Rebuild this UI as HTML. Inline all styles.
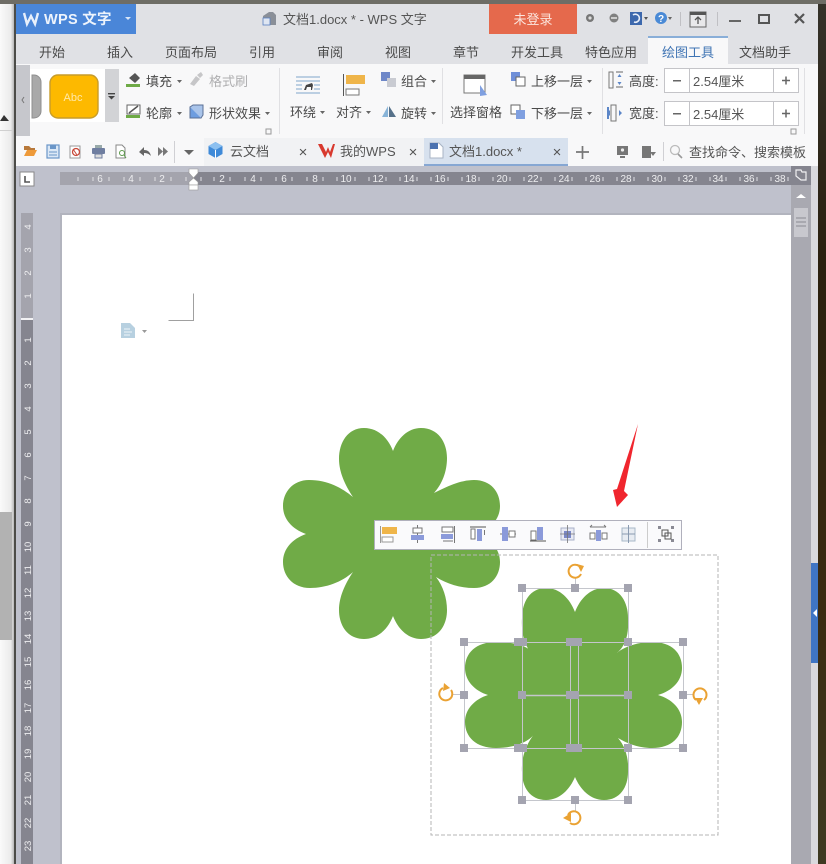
<!DOCTYPE html>
<html lang="zh"><head><meta charset="utf-8"><title>WPS 文字</title>
<style>
html,body{margin:0;padding:0;background:#fff;width:826px;height:864px;overflow:hidden}
svg{display:block;position:absolute;left:0;top:0;filter:blur(.35px)}
text{font-family:"Liberation Sans","Noto Sans CJK SC",sans-serif;fill:#444;font-size:13px}
.t{font-size:13px;fill:#4a4a4a}
.r{font-size:10px;fill:#eeeef0;text-anchor:middle}
.v{font-size:9.5px;fill:#eeeef0;text-anchor:middle}
.m{text-anchor:middle}
.x{font-size:15px;fill:#555;text-anchor:middle}
</style></head><body>
<svg width="826" height="864" viewBox="0 0 826 864" xmlns="http://www.w3.org/2000/svg">
<defs>
<linearGradient id="lg" x1="0" x2="1" y1="0" y2="0"><stop offset="0" stop-color="#fafafa"/><stop offset=".72" stop-color="#ebebeb"/><stop offset="1" stop-color="#a8a8a8"/></linearGradient>
<linearGradient id="rg" x1="0" x2="0" y1="0" y2="1"><stop offset="0" stop-color="#35322a"/><stop offset=".3" stop-color="#2a200f"/><stop offset=".7" stop-color="#3a2a10"/><stop offset="1" stop-color="#3e3a22"/></linearGradient>
</defs>
<!-- backdrop -->
<rect x="0" y="0" width="15" height="864" fill="url(#lg)"/>
<rect x="0" y="512" width="12" height="128" fill="#b2b2b2"/>
<rect x="0" y="130" width="13" height="1" fill="#d0d0d0"/>
<path d="M0 121L4 115L9 121Z" fill="#333"/>
<rect x="14" y="0" width="2" height="864" fill="#4c4c48"/>
<rect x="818" y="0" width="8" height="864" fill="url(#rg)"/>
<rect x="0" y="0" width="826" height="4" fill="#6e6d66"/>
<!-- chrome -->
<rect x="16" y="4" width="802" height="860" fill="#bfc1cc"/>
<rect x="16" y="4" width="802" height="60" fill="#e0e1e5"/>
<rect x="16" y="64" width="802" height="102" fill="#f8f8f9"/>
<!-- logo -->
<rect x="16" y="4" width="120" height="30" fill="#4a86d8"/>
<path d="M24 13L27 24L31 16L35 24L38 13" fill="none" stroke="#e8f0fb" stroke-width="2.4"/>
<text x="44" y="24" style="font-size:14.5px;font-weight:700;fill:#eef4fc;letter-spacing:.3px">WPS 文字</text>
<path d="M125 17L131 17L128 20Z" fill="#d8e6f8"/>
<!-- title -->
<path d="M263 16L269 12L273 12L276 15L276 25L263 25Z" fill="#8a8f98"/><rect x="263" y="18" width="7" height="7" fill="#dfe6f2" stroke="#5a80c0" stroke-width=".8"/>
<text x="283" y="24" style="font-size:13px;fill:#555">文档1.docx * - WPS 文字</text>
<rect x="489" y="4" width="88" height="30" fill="#e5694c"/>
<text x="533" y="24" class="m" style="font-size:13px;fill:#fbe5dd">未登录</text>
<!-- window buttons -->
<circle cx="590" cy="18" r="4" fill="#777" /><circle cx="590" cy="18" r="1.6" fill="#ddd"/>
<circle cx="614" cy="18" r="4.5" fill="#808080"/><rect x="611" y="17" width="6" height="2" fill="#ccc"/>
<rect x="630" y="12" width="12" height="13" fill="#3d68ad"/><path d="M633 15a4 4 0 1 1 1 7" fill="none" stroke="#e8eef8" stroke-width="1.6"/><path d="M644 17h4l-2 3z" fill="#555"/>
<circle cx="661" cy="18" r="6" fill="#4a8ad6"/><text x="661" y="22" class="m" style="font-size:10px;font-weight:700;fill:#fff">?</text><path d="M668 17h4l-2 3z" fill="#666"/>
<rect x="680" y="12" width="1" height="14" fill="#c0c0c4"/>
<rect x="690" y="12" width="16" height="15" fill="#e8e8ea" stroke="#666" stroke-width="1"/><rect x="690" y="12" width="16" height="3" fill="#555"/><path d="M698 24v-7M695 20l3-3 3 3" fill="none" stroke="#555" stroke-width="1.3"/>
<rect x="717" y="12" width="1" height="14" fill="#c0c0c4"/>
<rect x="729" y="20" width="12" height="2" fill="#666"/>
<rect x="759" y="15" width="10" height="8" fill="none" stroke="#555" stroke-width="2"/>
<path d="M795 14l9 9M804 14l-9 9" stroke="#555" stroke-width="2.2" fill="none"/>
<!-- tabs -->
<rect x="648" y="36" width="80" height="28" fill="#f8f8f9"/><rect x="648" y="36" width="80" height="2" fill="#89aed8"/>
<g class="t">
<text class="t m" x="52" y="57">开始</text><text class="t m" x="120" y="57">插入</text><text class="t m" x="191" y="57">页面布局</text><text class="t m" x="262" y="57">引用</text><text class="t m" x="330" y="57">审阅</text><text class="t m" x="398" y="57">视图</text><text class="t m" x="466" y="57">章节</text><text class="t m" x="537" y="57">开发工具</text><text class="t m" x="611" y="57">特色应用</text><text class="t m" x="688" y="57" style="fill:#3f74b4">绘图工具</text><text class="t m" x="765" y="57">文档助手</text>
</g>
<!-- ribbon gallery -->
<rect x="16" y="65" width="14" height="71" fill="#c6c7cc"/><path d="M24 97l-2 3 2 3" fill="none" stroke="#777"/>
<rect x="30" y="69" width="89" height="53" fill="#fff"/>
<path d="M32 75h2a7 7 0 0 1 7 7v29a7 7 0 0 1-7 7h-2z" fill="#a9a9a9" stroke="#8f8f8f"/>
<rect x="50" y="75" width="48" height="43" rx="8" fill="#fdb900" stroke="#c79c2a" stroke-width="1.4"/>
<text x="73" y="101" class="m" style="font-size:11px;fill:#ffe9a8">Abc</text>
<rect x="105" y="69" width="14" height="53" fill="#d2d3d6"/><rect x="108" y="93" width="7" height="1.4" fill="#444"/><path d="M108 96h7l-3.500 3.500z" fill="#444"/>
<!-- fill etc -->
<path d="M129 78l6-5 5 5-5 5zM131 73l3 2" fill="#555"/><rect x="126" y="84" width="14" height="3" fill="#6eaa46"/>
<text class="t" x="146" y="86">填充</text><path d="M177 80h5l-2.500 3z" fill="#666"/>
<path d="M190 84l6-8 4 3-6 7zM197 75l4-3 2 3-3 3z" fill="#c6c6c8"/>
<text class="t" x="209" y="86" style="fill:#aeaeb0">格式刷</text>
<rect x="127" y="105" width="13" height="9" fill="#fff" stroke="#666"/><path d="M129 113l9-7" stroke="#555" stroke-width="1.5"/><rect x="126" y="115" width="14" height="3" fill="#6eaa46"/>
<text class="t" x="146" y="118">轮廓</text><path d="M177 112h5l-2.500 3z" fill="#666"/>
<rect x="190" y="107" width="11" height="11" fill="#6d9de0" stroke="#5a6f95"/><path d="M190 107l3-2h10v10l-2 3" fill="#a9c4ea" stroke="#5a6f95"/>
<text class="t" x="209" y="118">形状效果</text><path d="M265 112h5l-2.500 3z" fill="#666"/>
<rect x="266" y="129" width="5" height="5" fill="none" stroke="#999"/>
<rect x="279" y="68" width="1" height="66" fill="#e0e0e3"/>
<!-- wrap -->
<g stroke="#7fa6cc" stroke-width="1"><path d="M296 77h24M296 81h24M296 85h6M314 85h6M296 89h6M314 89h6M296 93h24"/></g><path d="M304 90l2-5 6-2 1 2-1 5h-1v-3l-4 0-1 3z" fill="#444"/>
<text class="t" x="290" y="117">环绕</text><path d="M320 111h5l-2.500 3z" fill="#666"/>
<rect x="343" y="74" width="1" height="22" fill="#555"/><rect x="346" y="75" width="19" height="9" fill="#efb54a"/><rect x="346" y="89" width="13" height="6" fill="#fff" stroke="#777"/>
<text class="t" x="336" y="117">对齐</text><path d="M366 111h5l-2.500 3z" fill="#666"/>
<rect x="381" y="72" width="9" height="9" fill="#6e87c8"/><rect x="387" y="78" width="9" height="9" fill="#c9cbd2"/>
<text class="t" x="401" y="86">组合</text><path d="M431 80h5l-2.500 3z" fill="#666"/>
<path d="M382 117l6-11v11z" fill="#88b4d8"/><path d="M389 106l7 11h-7z" fill="#56718a"/>
<text class="t" x="401" y="118">旋转</text><path d="M431 112h5l-2.500 3z" fill="#666"/>
<rect x="442" y="68" width="1" height="56" fill="#e0e0e3"/>
<rect x="464" y="75" width="21" height="18" fill="#fff" stroke="#777"/><rect x="464" y="75" width="21" height="4" fill="#666"/><path d="M480 85l0 11 7-1z" fill="#7f9fe0"/>
<text class="t" x="450" y="117">选择窗格</text>
<rect x="511" y="72" width="9" height="9" fill="#6f8fd8"/><rect x="516" y="77" width="9" height="9" fill="#fff" stroke="#666"/>
<text class="t" x="531" y="86">上移一层</text><path d="M587 80h5l-2.500 3z" fill="#666"/>
<rect x="511" y="105" width="9" height="9" fill="#fff" stroke="#666"/><rect x="516" y="110" width="9" height="9" fill="#7f9fe0"/>
<text class="t" x="531" y="118">下移一层</text><path d="M587 112h5l-2.500 3z" fill="#666"/>
<rect x="602" y="68" width="1" height="66" fill="#e0e0e3"/>
<!-- size -->
<rect x="609" y="72" width="4" height="16" fill="none" stroke="#777"/><path d="M616 72h7M616 87h7" stroke="#666"/><path d="M619.500 74l-2 3h4zM619.500 85l-2-3h4z" fill="#5c86c8"/>
<text class="t" x="629" y="86">高度:</text>
<rect x="664.500" y="68.500" width="134" height="24" fill="#fff" stroke="#c4c4c8"/><path d="M689.500 68v25M773.500 68v25" stroke="#c4c4c8"/>
<rect x="673" y="80" width="8" height="1.500" fill="#666"/><path d="M782 80.500h8M786 76.500v8" stroke="#666" stroke-width="1.500"/>
<text x="693" y="86" style="font-size:13px;fill:#555">2.54厘米</text>
<rect x="607" y="107" width="2" height="12" fill="#5c86c8"/><rect x="611" y="105" width="5" height="16" fill="none" stroke="#777"/><path d="M607 113l3-3v6zM622 113l-3-3v6z" fill="#5c86c8"/>
<text class="t" x="629" y="118">宽度:</text>
<rect x="664.500" y="101.500" width="134" height="24" fill="#fff" stroke="#c4c4c8"/><path d="M689.500 101v25M773.500 101v25" stroke="#c4c4c8"/>
<rect x="673" y="113" width="8" height="1.500" fill="#666"/><path d="M782 113.500h8M786 109.500v8" stroke="#666" stroke-width="1.500"/>
<text x="693" y="119" style="font-size:13px;fill:#555">2.54厘米</text>
<rect x="791" y="129" width="5" height="5" fill="none" stroke="#999"/>
<rect x="804" y="68" width="1" height="66" fill="#e0e0e3"/>
<!-- QAT -->
<rect x="204" y="138" width="220" height="28" fill="#f1f2f4"/>
<path d="M24 146h5l2 2h4v2h-11z" fill="#b8793a"/><path d="M24 156l3-6h10l-3 6z" fill="#ee9a3a"/>
<rect x="47" y="145" width="12" height="13" fill="#dbe8f6" stroke="#6a96c8" stroke-width="1.2"/><rect x="50" y="145" width="6" height="4" fill="#6a96c8"/><path d="M49 152h8M49 155h8" stroke="#6a96c8"/>
<rect x="70" y="146" width="10" height="12" fill="#fff" stroke="#999"/><circle cx="76" cy="152" r="3.500" fill="none" stroke="#c84a3a" stroke-width="1.300"/><path d="M73 149l4 6" stroke="#c84a3a"/>
<rect x="92" y="148" width="13" height="6" rx="1" fill="#6f7ea0"/><rect x="95" y="145" width="7" height="3" fill="#9aa"/><rect x="95" y="154" width="7" height="4" fill="#ddd" stroke="#6f7ea0"/>
<path d="M116 145h6l3 3v10h-9z" fill="#fff" stroke="#888"/><circle cx="122" cy="153" r="2.500" fill="none" stroke="#5c9a4a"/><path d="M124 155l2 3" stroke="#5c9a4a"/>
<path d="M139 152l5-5v3c4 0 6 2 7 6-2-2-4-3-7-3v3z" fill="#666"/>
<path d="M158 147l5 4.500-5 4.500zM163 147l5 4.500-5 4.500z" fill="#777"/>
<rect x="174" y="141" width="1" height="22" fill="#d0d0d4"/>
<path d="M184 150h10l-5 5z" fill="#666"/>
<!-- doc tabs -->
<path d="M215.500 142l7 4v8l-7 4-7-4v-8z" fill="#3f8ad8"/><path d="M208.500 146l7 4 7-4-7-4z" fill="#8cc0f0"/><path d="M215.500 150v8" stroke="#fff"/>
<text x="230" y="156" style="font-size:13px;fill:#555">云文档</text><text x="303" y="157" class="x">×</text>
<path d="M318 144h4l4 8 2-5 2 5 3-8h2l-4 14-3-6-3 6z" fill="#d8392e"/>
<text x="340" y="156" style="font-size:13px;fill:#555">我的WPS</text><text x="413" y="157" class="x">×</text>
<rect x="424" y="138" width="144" height="28" fill="#d7e1ee"/><rect x="424" y="164" width="144" height="2" fill="#86a7d3"/>
<path d="M430 143h9l4 4v11h-13z" fill="#fff" stroke="#a8b4c4"/><rect x="430" y="143" width="8" height="6" fill="#4c72b0"/>
<text x="449" y="156" style="font-size:13px;fill:#555">文档1.docx *</text><text x="557" y="157" class="x">×</text>
<path d="M576 152h13M582.500 146v13" stroke="#777" stroke-width="1.700"/>
<rect x="617" y="146" width="11" height="9" fill="#777"/><circle cx="622.500" cy="150" r="1.600" fill="#eee"/><rect x="620" y="156" width="5" height="2" fill="#777"/>
<rect x="642" y="146" width="9" height="12" fill="#777"/><path d="M650 152h6l-3 4z" fill="#777"/>
<rect x="663" y="142" width="1" height="19" fill="#d0d0d4"/>
<circle cx="675" cy="150" r="4.500" fill="none" stroke="#bbb" stroke-width="1.300"/><path d="M678 154l4 4" stroke="#999" stroke-width="1.600"/>
<text x="689" y="157" style="font-size:13px;fill:#555">查找命令、搜索模板</text>
<!-- top ruler -->
<rect x="60" y="172" width="133" height="13" fill="#a4a4ad"/><rect x="193" y="172" width="598" height="13" fill="#85858f"/>
<g>
<text class="r" x="100" y="182">6</text><text class="r" x="131" y="182">4</text><text class="r" x="162" y="182">2</text><text class="r" x="222" y="182">2</text><text class="r" x="253" y="182">4</text><text class="r" x="284" y="182">6</text><text class="r" x="315" y="182">8</text><text class="r" x="346" y="182">10</text><text class="r" x="378" y="182">12</text><text class="r" x="409" y="182">14</text><text class="r" x="440" y="182">16</text><text class="r" x="471" y="182">18</text><text class="r" x="502" y="182">20</text><text class="r" x="533" y="182">22</text><text class="r" x="564" y="182">24</text><text class="r" x="595" y="182">26</text><text class="r" x="626" y="182">28</text><text class="r" x="657" y="182">30</text><text class="r" x="688" y="182">32</text><text class="r" x="718" y="182">34</text><text class="r" x="749" y="182">36</text><text class="r" x="780" y="182">38</text>
</g>
<path d="M78 177v4M93 177v4M109 177v4M124 177v4M140 177v4M155 177v4M171 177v4M186 177v4M201 177v4M214 177v4M230 177v4M245 177v4M261 177v4M276 177v4M292 177v4M307 177v4M323 177v4M337 177v4M355 177v4M369 177v4M386 177v4M400 177v4M417 177v4M431 177v4M448 177v4M462 177v4M479 177v4M493 177v4M510 177v4M524 177v4M541 177v4M555 177v4M572 177v4M586 177v4M603 177v4M617 177v4M634 177v4M648 177v4M665 177v4M679 177v4M696 177v4M710 177v4M726 177v4M740 177v4M757 177v4M771 177v4M788 177v4" stroke="#dfe0e4" stroke-width="1"/>
<path d="M189 169h9v4l-4.500 5-4.500-5z" fill="#fff" stroke="#999" stroke-width=".6"/><path d="M189 185v-3l4.500-4 4.500 4v3z" fill="#fff" stroke="#999" stroke-width=".6"/><rect x="189" y="185" width="9" height="5" fill="#fff" stroke="#999" stroke-width=".6"/>
<rect x="20" y="172" width="14" height="14" fill="#fff" stroke="#888"/><path d="M25 176v6h5" fill="none" stroke="#555" stroke-width="1.600"/>
<!-- vertical ruler -->
<rect x="21" y="213" width="12" height="107" fill="#a4a4ad"/><rect x="21" y="320" width="12" height="544" fill="#85858f"/><rect x="21" y="318" width="12" height="2" fill="#f2f2f4"/>
<g>
<text class="v" transform="translate(31 227) rotate(-90)">4</text><text class="v" transform="translate(31 250) rotate(-90)">3</text><text class="v" transform="translate(31 273) rotate(-90)">2</text><text class="v" transform="translate(31 296) rotate(-90)">1</text>
<text class="v" transform="translate(31 340) rotate(-90)">1</text><text class="v" transform="translate(31 363) rotate(-90)">2</text><text class="v" transform="translate(31 386) rotate(-90)">3</text><text class="v" transform="translate(31 409) rotate(-90)">4</text><text class="v" transform="translate(31 432) rotate(-90)">5</text><text class="v" transform="translate(31 455) rotate(-90)">6</text><text class="v" transform="translate(31 478) rotate(-90)">7</text><text class="v" transform="translate(31 501) rotate(-90)">8</text><text class="v" transform="translate(31 524) rotate(-90)">9</text><text class="v" transform="translate(31 547) rotate(-90)">10</text><text class="v" transform="translate(31 570) rotate(-90)">11</text><text class="v" transform="translate(31 593) rotate(-90)">12</text><text class="v" transform="translate(31 616) rotate(-90)">13</text><text class="v" transform="translate(31 639) rotate(-90)">14</text><text class="v" transform="translate(31 662) rotate(-90)">15</text><text class="v" transform="translate(31 685) rotate(-90)">16</text><text class="v" transform="translate(31 708) rotate(-90)">17</text><text class="v" transform="translate(31 731) rotate(-90)">18</text><text class="v" transform="translate(31 754) rotate(-90)">19</text><text class="v" transform="translate(31 777) rotate(-90)">20</text><text class="v" transform="translate(31 800) rotate(-90)">21</text><text class="v" transform="translate(31 823) rotate(-90)">22</text><text class="v" transform="translate(31 846) rotate(-90)">23</text>
</g>
<!-- page -->
<rect x="60" y="213" width="2" height="651" fill="#b2b4be"/><rect x="60" y="213" width="731" height="2" fill="#b2b4be"/>
<rect x="62" y="215" width="729" height="649" fill="#fff"/>
<!-- scrollbar -->
<rect x="791" y="166" width="20" height="698" fill="#a9a9b1"/><rect x="811" y="166" width="7" height="698" fill="#d9d9dd"/>
<rect x="791" y="166" width="20" height="19" fill="#85858f"/>
<path d="M796 170h5l1 2 4 0v8h-5l-5-4z" fill="none" stroke="#f0f0f2" stroke-width="1.200"/>
<path d="M796 198l5-4 5 4z" fill="#fff"/>
<rect x="794" y="208" width="14" height="29" fill="#c8c8ce"/><path d="M796 218h10M796 222h10M796 226h10" stroke="#8a8a92"/>
<rect x="811" y="563" width="7" height="100" fill="#3f75c4"/><path d="M817 609l-4 4 4 4z" fill="#fff"/>
<!-- page marks -->
<path d="M168.500 320.500h25v-27" fill="none" stroke="#a0a0a0" stroke-width="1"/>
<path d="M121 323h9l5 5v10h-14z" fill="#b7d0e0"/><path d="M124 329h6M124 332h8M124 335h6" stroke="#eef4f8"/>
<path d="M142 330h5l-2.500 3z" fill="#999"/>
<!-- flowers -->
<path fill="#70ab47" d="M393 451C398 438 408 428 421 428C438 428 447 442 447 458C447 472 442 484 434 493C446 487 460 480 474 480C491 480 500 492 500 506C500 519 491 529 476 534C491 539 500 549 500 562C500 576 491 588 474 588C460 588 447 584 436 577C443 586 447 598 447 610C447 626 438 639 421 639C408 639 398 629 393 616C388 629 378 639 364 639C348 639 339 626 339 610C339 597 345 584 353 572C342 582 326 588 310 588C293 588 283 576 283 562C283 549 292 539 306 534C292 529 283 519 283 506C283 492 293 480 309 480C328 480 342 488 353 497C345 485 339 472 339 459C339 442 348 428 364 428C378 428 388 438 393 451Z"/>
<path fill="#70ab47" d="M575 612C580 599 590 588 604 588C620 588 628 602 628 618C629 636 625 646 617 653C622 648 636 642 652 642C672 642 682 653 682 668C682 681 672 691 658 695C672 699 682 709 682 722C682 737 672 748 652 748C636 748 625 742 618 738C625 746 629 758 628 772C628 787 620 800 604 800C590 800 580 789 575 777C570 789 560 800 546 800C530 800 522 787 522 772C521 758 526 744 535 733C530 741 516 748 496 748C476 748 465 737 465 722C465 709 475 699 488 695C475 691 465 681 465 668C465 653 476 642 496 642C520 642 532 648 537 658C526 650 521 638 522 618C522 602 530 588 546 588C560 588 570 599 575 612Z"/>
<!-- dashed selection -->
<rect x="431" y="555" width="287" height="280" fill="none" stroke="#b4b4b4" stroke-width="1" stroke-dasharray="4 2"/>
<g fill="none" stroke="#c4c6cc" stroke-width="1">
<rect x="464.500" y="642.500" width="219" height="106"/><rect x="522.500" y="588.500" width="106" height="212"/>
<path d="M570.500 642v106M578.500 642v106"/><path d="M522 695.500h106" stroke-width="1.500"/>
<path d="M575.500 578v10M575.500 800v11M453 694.500h11M683 694.500h10"/>
</g>
<g fill="#a4a4b0">
<rect x="518" y="584" width="8" height="8"/><rect x="571" y="584" width="8" height="8"/><rect x="624" y="584" width="8" height="8"/>
<rect x="460" y="638" width="8" height="8"/><rect x="514" y="638" width="8" height="8"/><rect x="519" y="638" width="8" height="8"/><rect x="566" y="638" width="8" height="8"/><rect x="574" y="638" width="8" height="8"/><rect x="624" y="638" width="8" height="8"/><rect x="679" y="638" width="8" height="8"/>
<rect x="460" y="691" width="8" height="8"/><rect x="518" y="691" width="8" height="8"/><rect x="566" y="691" width="8" height="8"/><rect x="571" y="691" width="8" height="8"/><rect x="624" y="691" width="8" height="8"/><rect x="679" y="691" width="8" height="8"/>
<rect x="460" y="744" width="8" height="8"/><rect x="514" y="744" width="8" height="8"/><rect x="519" y="744" width="8" height="8"/><rect x="566" y="744" width="8" height="8"/><rect x="574" y="744" width="8" height="8"/><rect x="624" y="744" width="8" height="8"/><rect x="679" y="744" width="8" height="8"/>
<rect x="518" y="796" width="8" height="8"/><rect x="571" y="796" width="8" height="8"/><rect x="624" y="796" width="8" height="8"/>
</g>
<!-- rotate handles -->
<g fill="none" stroke="#eaa233" stroke-width="2">
<path d="M581 574A6.500 6.500 0 1 1 579 566"/><path d="M568 815A6.500 6.500 0 1 1 570 823"/><path d="M443 688A6.500 6.500 0 1 0 451 690"/><path d="M704 700A6.500 6.500 0 1 0 696 700"/>
</g>
<g fill="#eaa233"><path d="M577 564l7 2-3 6z"/><path d="M563 818l8-5v9z"/><path d="M444 683l6 5-7 3z"/><path d="M695 698h8l-4 7z"/></g>
<!-- floating toolbar -->
<rect x="374.500" y="520.500" width="307" height="29" fill="#fafafc" stroke="#b0b0bc" stroke-width="1"/>
<rect x="380" y="526" width="1" height="17" fill="#999"/><rect x="382" y="527" width="15" height="7" fill="#efb54a"/><rect x="382" y="537" width="11" height="5" fill="#fff" stroke="#999"/>
<path d="M417.500 525v18" stroke="#777"/><rect x="413" y="528" width="9" height="5" fill="#fff" stroke="#777"/><rect x="411" y="535" width="13" height="5" fill="#8b9ada"/>
<path d="M454.500 526v17" stroke="#777"/><rect x="442" y="527" width="11" height="5" fill="#fff" stroke="#777"/><rect x="441" y="534" width="12" height="5" fill="#8b9ada"/><path d="M443 541h10" stroke="#777"/>
<path d="M470 527h16" stroke="#555"/><rect x="471" y="529" width="4" height="10" fill="#fff" stroke="#777"/><rect x="477" y="529" width="5" height="12" fill="#8b9ada"/><path d="M484.500 535v-5" stroke="#777"/>
<path d="M500 534h16" stroke="#777"/><rect x="502" y="527" width="6" height="14" fill="#8b9ada"/><rect x="509" y="531" width="6" height="6" fill="#fff" stroke="#777"/>
<path d="M530 541h16" stroke="#555"/><rect x="531" y="531" width="5" height="9" fill="#fff" stroke="#777"/><rect x="537" y="527" width="6" height="13" fill="#8b9ada"/>
<rect x="561" y="528" width="13" height="12" fill="#e8eaf4" stroke="#a8b0c8"/><rect x="564" y="531" width="7" height="7" fill="#7a88c8"/><path d="M560 534h15M567.500 525v18" stroke="#777" stroke-width=".8"/>
<path d="M590 527h16M590 527l2-2M606 527l-2-2" stroke="#777" fill="none"/><rect x="590" y="533" width="5" height="6" fill="#fff" stroke="#777"/><rect x="596" y="530" width="5" height="11" fill="#8b9ada"/><rect x="602" y="533" width="5" height="6" fill="#fff" stroke="#777"/>
<rect x="622" y="528" width="13" height="13" fill="#e8ecf2" stroke="#a8b8c8"/><path d="M628.500 525v18M622 534h13" stroke="#8a9ab0"/>
<rect x="647" y="522" width="1" height="26" fill="#ccc"/>
<g fill="#8a8a94"><rect x="658" y="526" width="3" height="3"/><rect x="671" y="526" width="3" height="3"/><rect x="658" y="539" width="3" height="3"/><rect x="671" y="539" width="3" height="3"/></g>
<rect x="662" y="530" width="6" height="6" fill="none" stroke="#555"/><rect x="665" y="533" width="6" height="6" fill="none" stroke="#555"/>
<!-- red arrow -->
<polygon points="638,424 617,489 613,490 617,507 628,495 624,491" fill="#f0262e"/>
</svg>
</body></html>
